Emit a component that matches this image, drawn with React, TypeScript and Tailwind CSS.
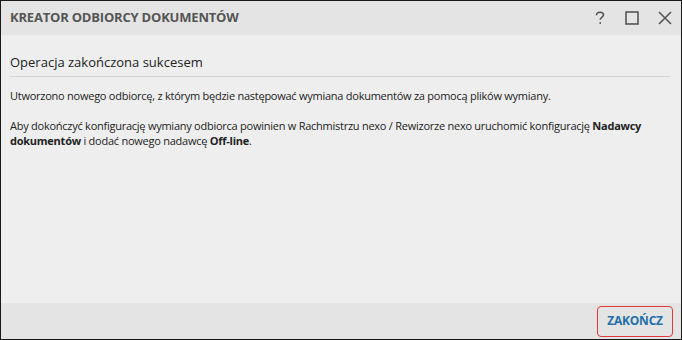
import React from "react";

/**
 * Title bar button icons drawn as small inline svgs
 */
function HelpIcon() {
  return (
    <svg width="12" height="14" viewBox="0 0 12 14" fill="none" stroke="#555" strokeWidth="1.6">
      <path d="M2.5 4.2 C2.5 2.2 4 1.2 6 1.2 C8 1.2 9.5 2.3 9.5 4 C9.5 6 6.2 6.3 6.2 8.8" />
      <circle cx="6.2" cy="12" r="0.9" fill="#555" stroke="none" />
    </svg>
  );
}

function MaximizeIcon() {
  return (
    <svg width="14" height="14" viewBox="0 0 14 14" fill="none" stroke="#555" strokeWidth="1.6">
      <rect x="1" y="1" width="12" height="12" />
    </svg>
  );
}

function CloseIcon() {
  return (
    <svg width="14" height="14" viewBox="0 0 14 14" fill="none" stroke="#555" strokeWidth="1.6">
      <path d="M1 1 L13 13 M13 1 L1 13" />
    </svg>
  );
}

export default function App() {
  return (
    <div
      className="w-[682px] h-[340px] border border-[#1a1a1a] bg-[#eeeeee] flex flex-col text-[#222]"
      style={{ fontFamily: '"Open Sans", "Noto Sans", sans-serif' }}
    >
      {/* title bar */}
      <div className="h-[34px] bg-[#e4e4e4] flex items-center pl-[9px] pr-[9px]">
        <span className="text-[13px] font-bold text-[#555] tracking-[-0.2px]">KREATOR ODBIORCY DOKUMENTÓW</span>
        <div className="ml-auto flex items-center gap-[19px]">
          <HelpIcon />
          <MaximizeIcon />
          <CloseIcon />
        </div>
      </div>

      {/* content */}
      <div className="flex-1 px-[9px] pt-[18px]">
        <div className="text-[13px] text-[#222] pb-[3px] border-b border-[#d4d4d4] mr-[2px]">
          Operacja zakończona sukcesem
        </div>
        <p className="text-[11px] leading-[15px] mt-[11px] tracking-[-0.25px]">
          Utworzono nowego odbiorcę, z którym będzie następować wymiana dokumentów za pomocą plików wymiany.
        </p>
        <p className="text-[11px] leading-[15px] mt-[15px] tracking-[-0.25px] pr-[20px]">
          Aby dokończyć konfigurację wymiany odbiorca powinien w Rachmistrzu nexo / Rewizorze nexo uruchomić konfigurację{" "}
          <b>Nadawcy dokumentów</b> i dodać nowego nadawcę <b>Off-line</b>.
        </p>
      </div>

      {/* footer */}
      <div className="h-[36px] bg-[#e4e4e4] flex items-center justify-end pr-[8px]">
        <button className="h-[31px] w-[76px] border border-[#e0393e] rounded-[4px] text-[12px] font-bold text-[#1f6fa8] tracking-[-0.2px]">
          ZAKOŃCZ
        </button>
      </div>
    </div>
  );
}
